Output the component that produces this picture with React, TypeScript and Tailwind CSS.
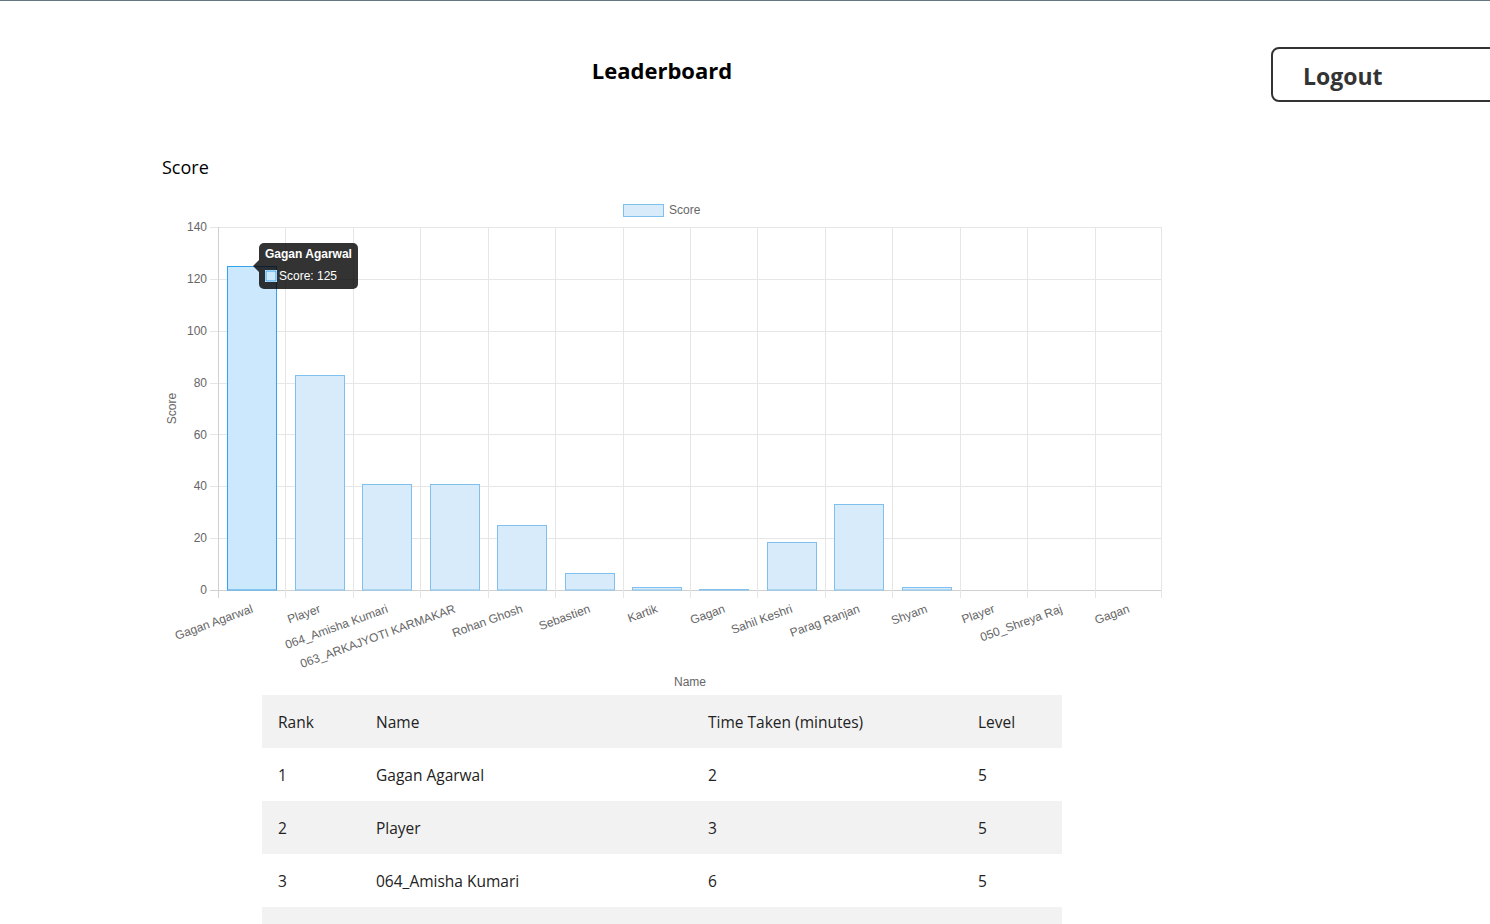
import React from 'react'

const players = [
  { name: 'Gagan Agarwal', score: 125, time: 2, level: 5 },
  { name: 'Player', score: 83, time: 3, level: 5 },
  { name: '064_Amisha Kumari', score: 41, time: 6, level: 5 },
  { name: '063_ARKAJYOTI KARMAKAR', score: 41, time: 7, level: 5 },
  { name: 'Rohan Ghosh', score: 25, time: 9, level: 4 },
  { name: 'Sebastien', score: 6.5, time: 4, level: 2 },
  { name: 'Kartik', score: 1, time: 5, level: 1 },
  { name: 'Gagan', score: 0.2, time: 1, level: 1 },
  { name: 'Sahil Keshri', score: 18.5, time: 8, level: 3 },
  { name: 'Parag Ranjan', score: 33, time: 10, level: 4 },
  { name: 'Shyam', score: 1, time: 3, level: 1 },
  { name: 'Player', score: 0, time: 2, level: 1 },
  { name: '050_Shreya Raj', score: 0, time: 2, level: 1 },
  { name: 'Gagan', score: 0, time: 1, level: 1 },
]

// chart geometry (svg coords)
const L = 56
const R = 1000
const T = 32
const B = 395
const MAX = 140
const cw = (R - L) / players.length
const bw = cw * 0.72
const yOf = (v: number) => B - (v / MAX) * (B - T)

const ScoreChart = () => {
  const ticks = [0, 20, 40, 60, 80, 100, 120, 140]
  return (
    <svg width={1000} height={500} className="block" style={{ fontFamily: '"Liberation Sans", Arial, sans-serif' }}>
      {/* legend */}
      <rect x={461.5} y={9.5} width={40} height={12} fill="#d7ebfa" stroke="#7fc0ef" strokeWidth={1} />
      <text x={507} y={16} fontSize={12} fill="#666" dominantBaseline="middle">Score</text>

      {/* grid */}
      {ticks.map((t) => (
        <g key={t}>
          <line x1={L - 8} x2={R} y1={Math.round(yOf(t)) + 0.5} y2={Math.round(yOf(t)) + 0.5} stroke={t === 0 ? '#d0d0d0' : '#e6e6e6'} />
          <text x={L - 11} y={yOf(t) + 1} fontSize={12} fill="#666" textAnchor="end" dominantBaseline="middle">{t}</text>
        </g>
      ))}
      {players.map((_, i) => (
        <line key={i} x1={Math.round(L + i * cw) + 0.5} x2={Math.round(L + i * cw) + 0.5} y1={T} y2={B + 8} stroke={i === 0 ? '#d0d0d0' : '#e6e6e6'} />
      ))}
      <line x1={R - 0.5} x2={R - 0.5} y1={T} y2={B + 8} stroke="#e6e6e6" />

      {/* bars */}
      {players.map((p, i) => {
        if (p.score <= 0) return null
        const x = L + i * cw + (cw - bw) / 2
        const y = Math.min(yOf(p.score), B - 1)
        const hov = i === 0
        return (
          <rect key={i} x={Math.round(x) + 0.5} y={Math.round(y) + 0.5} width={Math.round(bw)} height={Math.max(0, B - Math.round(y) - 0.5)}
            fill={hov ? '#cce8fc' : '#d7ebfa'} stroke={hov ? '#36a2eb' : '#7fc0ef'} strokeWidth={1} />
        )
      })}

      {/* x labels */}
      {players.map((p, i) => {
        const cx = L + i * cw + cw / 2 + 1
        const cy = 414
        return (
          <text key={i} x={cx} y={cy} fontSize={12} fill="#666" textAnchor="end" dominantBaseline="middle" transform={`rotate(-20 ${cx} ${cy})`}>
            {p.name}
          </text>
        )
      })}

      {/* axis titles */}
      <text x={528} y={488} fontSize={12} fill="#666" textAnchor="middle" dominantBaseline="middle">Name</text>
      <text x={11} y={213.5} fontSize={12} fill="#666" textAnchor="middle" dominantBaseline="middle" transform="rotate(-90 11 213.5)">Score</text>

      {/* tooltip */}
      <path d="M91 71 L97 65 L97 77 Z" fill="rgba(0,0,0,0.8)" />
      <rect x={97} y={48} width={99} height={46} rx={5} fill="rgba(0,0,0,0.8)" />
      <text x={103} y={60} fontSize={12} fontWeight="bold" fill="#fff" dominantBaseline="middle">Gagan Agarwal</text>
      <rect x={103} y={75} width={12} height={12} fill="#fff" />
      <rect x={104} y={76} width={10} height={10} fill="#cce8fc" stroke="#36a2eb" strokeWidth={1} />
      <text x={117} y={82} fontSize={12} fill="#fff" dominantBaseline="middle">Score: 125</text>
    </svg>
  )
}

const App = () => {
  return (
    <div className="w-full overflow-hidden border-t border-[#64767f] bg-white pb-10" style={{ fontFamily: '"Open Sans", "Noto Sans", sans-serif' }}>
      <div className="flex items-start mt-[46px]">
        <div className="w-[1271px] shrink-0 pl-[53px] pt-[7px] text-center">
          <h1 className="text-[22px] leading-[32px] font-bold text-black">Leaderboard</h1>
        </div>
        <button className="w-[240px] h-[55px] shrink-0 border-2 border-[#333] rounded-[8px] text-left pl-[30px] pt-[3px] text-[23px] font-bold text-[#333]">
          Logout
        </button>
      </div>

      <div className="w-[1000px] ml-[162px]">
        <h2 className="mt-[53px] text-[18px] leading-[24px] text-black">Score</h2>
        <div className="mt-[16px]">
          <ScoreChart />
        </div>

        <table className="ml-[100px] w-[800px] border-collapse text-[15.5px] text-[#222] table-fixed">
          <colgroup>
            <col className="w-[98px]" />
            <col className="w-[332px]" />
            <col className="w-[270px]" />
            <col className="w-[100px]" />
          </colgroup>
          <thead>
            <tr className="h-[53px] bg-[#f2f2f2] text-left">
              <th className="px-4 pt-[2px] font-medium">Rank</th>
              <th className="px-4 pt-[2px] font-medium">Name</th>
              <th className="px-4 pt-[2px] font-medium">Time Taken (minutes)</th>
              <th className="px-4 pt-[2px] font-medium">Level</th>
            </tr>
          </thead>
          <tbody>
            {players.map((p, i) => (
              <tr key={i} className={i % 2 === 1 ? 'h-[53px] bg-[#f2f2f2]' : 'h-[53px] bg-white'}>
                <td className="px-4 pt-[2px]">{i + 1}</td>
                <td className="px-4 pt-[2px]">{p.name}</td>
                <td className="px-4 pt-[2px]">{p.time}</td>
                <td className="px-4 pt-[2px]">{p.level}</td>
              </tr>
            ))}
          </tbody>
        </table>
      </div>
    </div>
  )
}

export default App
